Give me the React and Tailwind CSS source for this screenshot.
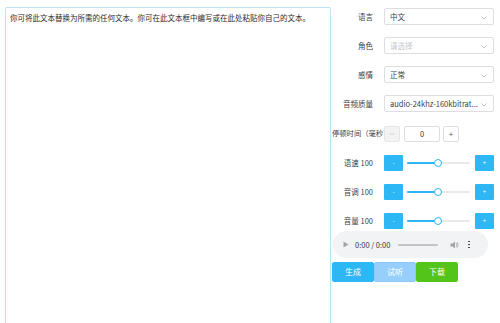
import React from "react";

const font = { fontFamily: '"Noto Sans CJK SC", "Noto Sans", sans-serif' };

function Chevron() {
  return (
    <svg width="6" height="4" viewBox="0 0 6 4" className="absolute right-[6px] top-[7px]">
      <path d="M0.5 0.5 L3 3 L5.5 0.5" fill="none" stroke="#b4b8bf" strokeWidth="0.8" />
    </svg>
  );
}

function Label({ children }) {
  return (
    <div className="w-[53px] shrink-0 pr-[11px] text-right text-[7.5px] text-[#3a3f48] whitespace-nowrap leading-none">
      {children}
    </div>
  );
}

function SelectRow({ label, value, placeholder, mt }) {
  return (
    <div className={`flex items-center h-[17px] ${mt}`}>
      <Label>{label}</Label>
      <div className="relative w-[110px] h-[17px] border border-[#dcdee2] rounded-[2px] bg-white flex items-center pl-[5px]">
        <span className={`text-[7.5px] leading-none whitespace-nowrap ${placeholder ? "text-[#c5c8ce]" : "text-[#3a3f48]"}`}>
          {value}
        </span>
        <Chevron />
      </div>
    </div>
  );
}

function SliderRow({ label, mt }) {
  return (
    <div className={`flex items-center h-[16px] ${mt}`}>
      <Label>{label}</Label>
      <div className="w-[19px] h-[16px] bg-[#2db7f5] rounded-[1px] flex items-center justify-center text-white text-[6px] leading-none">-</div>
      <div className="relative w-[63px] h-[16px] ml-[4px] flex items-center">
        <div className="w-full h-[2px] bg-[#e8eaec] rounded-full"></div>
        <div className="absolute left-0 top-[7px] w-[31px] h-[2px] bg-[#2db7f5] rounded-full"></div>
        <div className="absolute left-[27px] top-[4px] w-[8px] h-[8px] rounded-full bg-white border-[1.5px] border-[#2db7f5]"></div>
      </div>
      <div className="w-[19px] h-[16px] bg-[#2db7f5] rounded-[1px] flex items-center justify-center text-white text-[6px] leading-none ml-[5px]">+</div>
    </div>
  );
}

export default function App() {
  return (
    <div className="w-[500px] h-[323px] overflow-hidden bg-white flex" style={font}>
      <div className="w-[331px] shrink-0 pl-[5px] pt-[7px]">
        <div className="w-full h-[400px] border border-[#bde3f6] rounded-[2px] px-[4px] pt-[5px] text-[7.5px] leading-[10px] text-[#2b2b2b]">
          你可将此文本替换为所需的任何文本。你可在此文本框中编写或在此处粘贴你自己的文本。
        </div>
      </div>
      <div className="w-[169px] shrink-0 flex flex-col pt-[8px]">
        <SelectRow label="语言" value="中文" mt="" />
        <SelectRow label="角色" value="请选择" placeholder mt="mt-[12px]" />
        <SelectRow label="感情" value="正常" mt="mt-[12px]" />
        <SelectRow label="音频质量" value="audio-24khz-160kbitrat..." mt="mt-[12px]" />

        <div className="flex items-center h-[16px] mt-[14px]">
          <div className="w-[53px] shrink-0 whitespace-nowrap text-[7.3px] leading-none text-[#3a3f48] pl-[1px]">
            停顿时间（毫秒
          </div>
          <div className="w-[16px] h-[16px] bg-[#f3f3f3] border border-[#e4e6ea] rounded-[2px] flex items-center justify-center">
            <svg width="6" height="2" viewBox="0 0 6 2">
              <path d="M0 1 H6" stroke="#c5c8ce" strokeWidth="0.8" />
            </svg>
          </div>
          <div className="w-[36px] h-[16px] ml-[4px] border border-[#dcdee2] rounded-[2px] flex items-center justify-center text-[7.5px] text-[#3a3f48] leading-none">0</div>
          <div className="w-[16px] h-[16px] ml-[3px] border border-[#dcdee2] rounded-[2px] flex items-center justify-center text-[#515a6e] text-[8px] leading-none">+</div>
        </div>

        <SliderRow label="语速 100" mt="mt-[13px]" />
        <SliderRow label="音调 100" mt="mt-[13px]" />
        <SliderRow label="音量 100" mt="mt-[13px]" />

        <div className="mt-[2px] ml-[2px] w-[155px] h-[27px] rounded-full bg-[#f1f3f4] flex items-center pl-[10px]">
          <svg width="6" height="7" viewBox="0 0 6 7">
            <path d="M0.5 0.5 L5.5 3.5 L0.5 6.5 Z" fill="#a6a6a6" />
          </svg>
          <span className="ml-[6px] text-[7.5px] leading-none text-[#3b3b3b] whitespace-nowrap">0:00 / 0:00</span>
          <div className="ml-[8px] w-[40px] h-[2px] bg-[#c4c4c4] rounded-full"></div>
          <svg width="9" height="8" viewBox="0 0 9 8" className="ml-[12px]">
            <path d="M0.5 2.5 H2.5 L5 0.5 V7.5 L2.5 5.5 H0.5 Z" fill="#a6a6a6" />
            <path d="M6.2 2.2 Q7.4 4 6.2 5.8" fill="none" stroke="#a6a6a6" strokeWidth="0.8" />
            <path d="M7.2 1.2 Q9 4 7.2 6.8" fill="none" stroke="#a6a6a6" strokeWidth="0.8" />
          </svg>
          <div className="ml-[9px] flex flex-col gap-[1.5px]">
            <div className="w-[1.5px] h-[1.5px] bg-[#333] rounded-full"></div>
            <div className="w-[1.5px] h-[1.5px] bg-[#333] rounded-full"></div>
            <div className="w-[1.5px] h-[1.5px] bg-[#333] rounded-full"></div>
          </div>
        </div>

        <div className="mt-[4px] ml-[1px] flex">
          <div className="w-[42px] h-[20px] bg-[#2db7f5] border border-[#2db7f5] rounded-[2px] flex items-center justify-center text-white text-[8px] leading-none">生成</div>
          <div className="w-[42px] h-[20px] bg-[#96cffc] border border-[#8cc8f7] rounded-[2px] flex items-center justify-center text-white text-[8px] leading-none">试听</div>
          <div className="w-[42px] h-[20px] bg-[#52c41a] border border-[#52c41a] rounded-[2px] flex items-center justify-center text-white text-[8px] leading-none">下载</div>
        </div>
      </div>
    </div>
  );
}
